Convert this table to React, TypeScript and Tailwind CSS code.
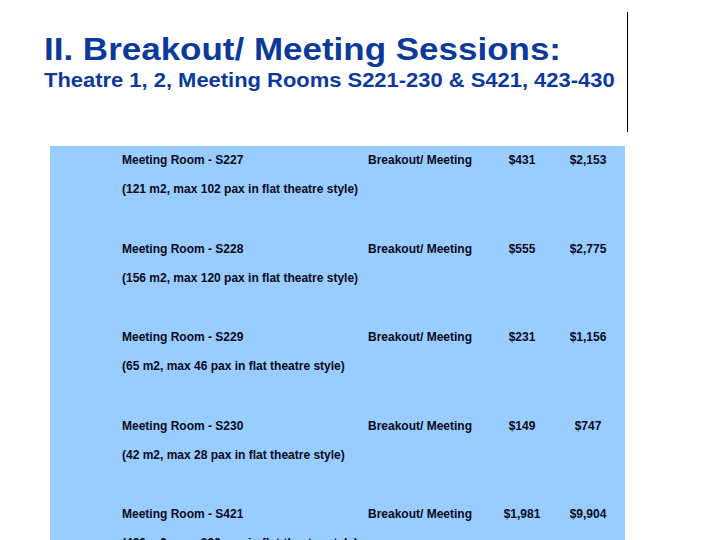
const rooms = [
  { name: 'Meeting Room - S227', note: '(121 m2, max 102 pax in flat theatre style)', day: '$431', total: '$2,153' },
  { name: 'Meeting Room - S228', note: '(156 m2, max 120 pax in flat theatre style)', day: '$555', total: '$2,775' },
  { name: 'Meeting Room - S229', note: '(65 m2, max 46 pax in flat theatre style)', day: '$231', total: '$1,156' },
  { name: 'Meeting Room - S230', note: '(42 m2, max 28 pax in flat theatre style)', day: '$149', total: '$747' },
  { name: 'Meeting Room - S421', note: '(420 m2, max 336 pax in flat theatre style)', day: '$1,981', total: '$9,904' },
]

export default function App() {
  return (
    <div className="h-[540px] w-[720px] overflow-hidden bg-white font-['Liberation_Sans',Arial,sans-serif]">
      {/* header with the thin rule on its right */}
      <div className="mt-[12px] h-[120px] w-[628px] border-r border-black pl-[44px] pt-[21px]">
        <h1 className="origin-left scale-x-[1.093] whitespace-nowrap text-[32px] font-bold leading-[32px] text-[#0b3a9c]">
          II. Breakout/ Meeting Sessions:
        </h1>
        <h2 className="mt-[5px] origin-left scale-x-[1.07] whitespace-nowrap text-[20.5px] font-bold leading-[20px] text-[#0b3a9c]">
          Theatre 1, 2, Meeting Rooms S221-230 &amp; S421, 423-430
        </h2>
      </div>

      {/* rate table */}
      <div className="ml-[50px] mt-[14px] w-[575px] bg-[#99ccff] pl-[72px] pt-[6px] text-[12px] font-bold leading-4 text-[#0a0a1a]">
        {rooms.map((r) => (
          <div key={r.name} className="flex h-[88.5px] flex-col">
            <div className="flex h-4 items-center">
              <span className="w-[246px] whitespace-nowrap">{r.name}</span>
              <span className="w-[122px] whitespace-nowrap">Breakout/ Meeting</span>
              <span className="w-[64px] text-center">{r.day}</span>
              <span className="w-[68px] text-center">{r.total}</span>
            </div>
            <div className="mt-[13px] h-4 whitespace-nowrap">{r.note}</div>
          </div>
        ))}
      </div>
    </div>
  )
}
